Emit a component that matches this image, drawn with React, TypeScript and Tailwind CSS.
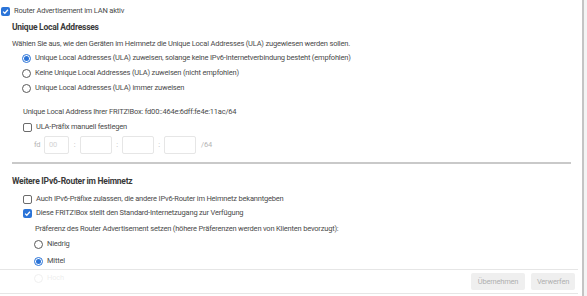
import React from "react";

const Check = ({ checked }: { checked?: boolean }) =>
  checked ? (
    <span className="flex h-[9px] w-[9px] shrink-0 items-center justify-center rounded-[2px] bg-[#2b74d8]">
      <svg width="7" height="7" viewBox="0 0 10 10">
        <path d="M1.5 5.2 L4 7.5 L8.5 2.5" fill="none" stroke="#fff" strokeWidth="1.8" />
      </svg>
    </span>
  ) : (
    <span className="h-[9px] w-[9px] shrink-0 rounded-[2px] border border-[#6b6b6b] bg-white" />
  );

const Radio = ({ checked }: { checked?: boolean }) =>
  checked ? (
    <span className="flex h-[9px] w-[9px] shrink-0 items-center justify-center rounded-full border border-[#2b74d8] bg-white">
      <span className="h-[5px] w-[5px] rounded-full bg-[#2b74d8]" />
    </span>
  ) : (
    <span className="h-[9px] w-[9px] shrink-0 rounded-full border border-[#5a5a5a] bg-white" />
  );

const Field = () => (
  <div className="h-[18px] w-[32px] rounded-[2px] border border-[#e6e6e6] bg-white" />
);

const Row = ({ children }: { children: React.ReactNode }) => (
  <div className="flex h-[10px] items-center gap-[4px]">{children}</div>
);

export default function App() {
  return (
    <div
      className="relative h-[296px] w-[587px] overflow-hidden bg-white text-[7.5px] leading-[10px] tracking-[-0.2px] text-[#4a4a4a]"
      style={{ fontFamily: "Roboto, 'Noto Sans', sans-serif" }}
    >
      <div className="flex h-full">
        <div className="flex w-[582px] flex-col">
          <div className="flex h-[10px] items-center gap-[4px] pl-[1px] mt-[6px]">
            <Check checked />
            <span>Router Advertisement im LAN aktiv</span>
          </div>
          <div className="flex flex-col pl-[12px] pr-[11px]">
            <div className="mt-[5px] flex h-[12px] items-center text-[8.5px] font-bold tracking-[-0.25px] text-[#3a3a3a]">
              Unique Local Addresses
            </div>
            <div className="mt-[6px] flex h-[10px] items-center">
              Wählen Sie aus, wie den Geräten im Heimnetz die Unique Local Addresses (ULA) zugewiesen werden sollen.
            </div>
            <div className="mt-[4px] flex flex-col gap-[5px] pl-[10px]">
              <Row>
                <Radio checked />
                <span>
                  Unique Local Addresses (ULA) zuweisen, solange keine IPv6-Internetverbindung besteht (empfohlen)
                </span>
              </Row>
              <Row>
                <Radio />
                <span>Keine Unique Local Addresses (ULA) zuweisen (nicht empfohlen)</span>
              </Row>
              <Row>
                <Radio />
                <span>Unique Local Addresses (ULA) immer zuweisen</span>
              </Row>
            </div>
            <div className="mt-[14px] flex h-[10px] items-center pl-[11px]">
              Unique Local Address Ihrer FRITZ!Box: fd00::464e:6dff:fe4e:11ac/64
            </div>
            <div className="mt-[5px] pl-[11px]">
              <Row>
                <Check />
                <span>ULA-Präfix manuell festlegen</span>
              </Row>
            </div>
            <div className="mt-[4px] flex h-[18px] items-center pl-[22px] text-[#b4b4b4]">
              <span className="w-[10px]">fd</span>
              <div className="flex h-[18px] w-[25px] items-center rounded-[2px] border border-[#e6e6e6] pl-[4px] text-[#d4d4d4]">
                00
              </div>
              <span className="w-[11px] text-center">:</span>
              <Field />
              <span className="w-[10px] text-center">:</span>
              <Field />
              <span className="w-[10px] text-center">:</span>
              <Field />
              <span className="pl-[5px]">/64</span>
            </div>
            <div className="mt-[8px] h-[2px] bg-[#c9c9c9]" />
            <div className="mt-[11px] flex h-[12px] items-center text-[8.5px] font-bold tracking-[-0.25px] text-[#3a3a3a]">
              Weitere IPv6-Router im Heimnetz
            </div>
            <div className="mt-[7px] flex flex-col gap-[4px] pl-[11px]">
              <Row>
                <Check />
                <span>Auch IPv6-Präfixe zulassen, die andere IPv6-Router im Heimnetz bekanntgeben</span>
              </Row>
              <Row>
                <Check checked />
                <span>Diese FRITZ!Box stellt den Standard-Internetzugang zur Verfügung</span>
              </Row>
            </div>
            <div className="mt-[6px] flex h-[10px] items-center pl-[23px]">
              Präferenz des Router Advertisement setzen (höhere Präferenzen werden von Klienten bevorzugt):
            </div>
            <div className="mt-[5px] flex flex-col gap-[7px] pl-[22px]">
              <Row>
                <Radio />
                <span>Niedrig</span>
              </Row>
              <Row>
                <Radio checked />
                <span>Mittel</span>
              </Row>
              <Row>
                <Radio />
                <span>Hoch</span>
              </Row>
            </div>
          </div>
        </div>
        <div className="w-[5px] border-l-2 border-[#c4c4c4] bg-[#f4f4f4]" />
      </div>
      <div className="absolute left-0 top-[269px] h-[25px] w-[578px] border-b border-t border-[#e6e6e6] bg-white/90">
        <div className="flex h-full items-center justify-end gap-[6px] pr-[3px]">
          <div className="flex h-[17px] w-[54px] items-center justify-center rounded-[2px] bg-[#efefef] text-[#b0b0b0]">
            Übernehmen
          </div>
          <div className="flex h-[17px] w-[44px] items-center justify-center rounded-[2px] bg-[#efefef] text-[#b0b0b0]">
            Verwerfen
          </div>
        </div>
      </div>
    </div>
  );
}
